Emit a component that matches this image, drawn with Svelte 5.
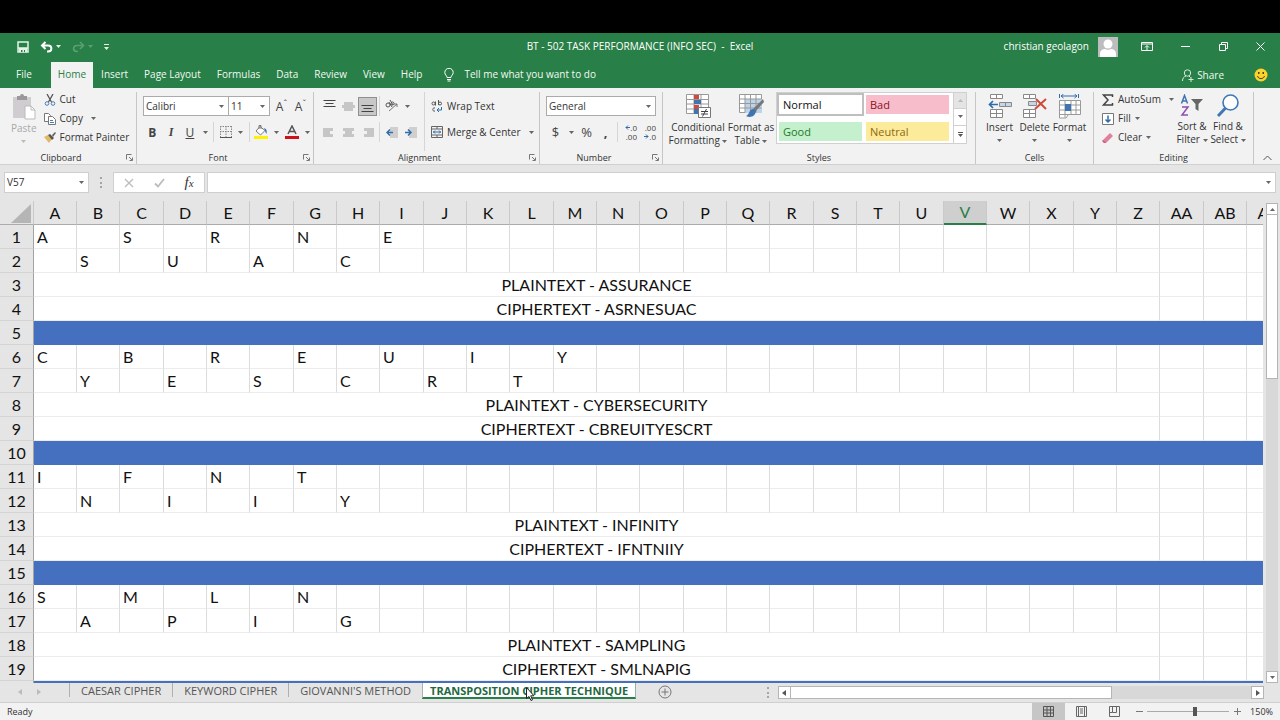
<script lang="ts">
interface Block {
	readonly plain: string;
	readonly cipher: string;
}

type RowKind = 'letters' | 'merged' | 'divider';

interface Row {
	readonly kind: RowKind;
	readonly text: string;
	readonly offset: number;
}

const blocks: readonly Block[] = [
	{ plain: 'ASSURANCE', cipher: 'ASRNESUAC' },
	{ plain: 'CYBERSECURITY', cipher: 'CBREUITYESCRT' },
	{ plain: 'INFINITY', cipher: 'IFNTNIIY' },
	{ plain: 'SAMPLING', cipher: 'SMLNAPIG' },
];

const letters = 'ABCDEFGHIJKLMNOPQRSTUVWXYZ'.split('');
const columns = [...letters, 'AA', 'AB', 'AC'];
const mergedSpan = 26;
const extraColumns = columns.slice(mergedSpan);

// each word fills two rail rows, two merged rows and a divider
const rows: Row[] = blocks.flatMap((b) => [
	{ kind: 'letters', text: b.plain, offset: 0 },
	{ kind: 'letters', text: b.plain, offset: 1 },
	{ kind: 'merged', text: `PLAINTEXT - ${b.plain}`, offset: 0 },
	{ kind: 'merged', text: `CIPHERTEXT - ${b.cipher}`, offset: 0 },
	{ kind: 'divider', text: '', offset: 0 },
]);

function letterAt(row: Row, col: number) {
	return col % 2 === row.offset ? (row.text[col] ?? '') : '';
}

const menu = ['File', 'Home', 'Insert', 'Page Layout', 'Formulas', 'Data', 'Review', 'View', 'Help'];
const sheets = ['CAESAR CIPHER', 'KEYWORD CIPHER', "GIOVANNI'S METHOD", 'TRANSPOSITION CIPHER TECHNIQUE'];

let activeMenu = $state('Home');
let activeSheet = $state(sheets[3]);
let selectedColumn = $state('V');
let formula = $state('');
let zoom = $state(59);
</script>

{#snippet caret()}
	<svg class="caret" viewBox="0 0 5 3" aria-hidden="true"><path d="M0 0h5L2.5 3z" /></svg>
{/snippet}

{#snippet launcher(name: string)}
	<button class="launcher" aria-label="{name} settings">
		<svg width="7" height="7" viewBox="0 0 7 7" aria-hidden="true">
			<path d="M.5 5.500V.5h5M3 3l3 3M6.500 3.500v3h-3" fill="none" stroke="#777" />
		</svg>
	</button>
{/snippet}

{#snippet lines(widths: number[], align: string)}
	<svg width="13" height="9" viewBox="0 0 13 9" aria-hidden="true">
		{#each widths as w, i}
			<path
				d="M{align === 'left' ? 0 : align === 'right' ? 13 - w : (13 - w) / 2} {i * 3 + 1.5}h{w}"
				stroke="currentColor"
			/>
		{/each}
	</svg>
{/snippet}

<div class="app">
	<div class="letterbox"></div>

	<header class="titlebar">
		<div class="quick">
			<button aria-label="Save">
				<svg width="12" height="12" viewBox="0 0 12 12">
					<path d="M1 1h10v10H1zM1 7h10" fill="none" stroke="#e4f3e8" stroke-width="1.500" />
					<path d="M2 7h8v4H2z" fill="#e4f3e8" />
					<path d="M4 9h1.500v2H4zM7 9h1v2H7z" fill="#287e47" />
				</svg>
			</button>
			<button class="undo" aria-label="Undo">
				<svg width="13" height="12" viewBox="0 0 13 12" fill="none" stroke="#fff" stroke-width="2">
					<path d="M5.500 1 2 4.500 5.500 8M2 4.500h6c4.500 0 4.500 6 0 6H7" />
				</svg>
				{@render caret()}
			</button>
			<button class="redo" aria-label="Redo">
				<svg width="13" height="12" viewBox="0 0 13 12" fill="none" stroke="#5a9f70" stroke-width="1.700">
					<path d="m8 1 3.500 3.500L8 8M11 4.500H5c-4.500 0-4.500 6 0 6h1" />
				</svg>
				{@render caret()}
			</button>
			<button aria-label="Customize Quick Access Toolbar">
				<svg width="5" height="6" viewBox="0 0 5 6"><path d="M0 0h5v1H0zM0 3h5L2.500 6z" fill="#e4f3e8" /></svg>
			</button>
		</div>
		<h1>BT - 502 TASK PERFORMANCE (INFO SEC) &nbsp;- &nbsp;Excel</h1>
		<div class="window">
			<span class="user">christian geolagon</span>
			<svg class="avatar" width="20" height="20" viewBox="0 0 20 20" aria-hidden="true">
				<path d="M0 0h20v20H0z" fill="#bdbcbe" />
				<circle cx="10" cy="7" r="4.500" fill="#fff" />
				<path d="M2 20v-3c0-4 3-5 5-5l3 1 3-1c2 0 5 1 5 5v3z" fill="#fff" />
			</svg>
			<button aria-label="Ribbon Display Options">
				<svg width="12" height="10" viewBox="0 0 12 10" fill="none" stroke="#fff">
					<path d="M.5.5h11v8H.5zM.5 2h11M6 8V4M4 5.500l2-2 2 2" />
				</svg>
			</button>
			<button aria-label="Minimize">
				<svg width="9" height="9" viewBox="0 0 9 9"><path d="M0 4.500h9" stroke="#fff" /></svg>
			</button>
			<button aria-label="Restore">
				<svg width="9" height="9" viewBox="0 0 9 9" fill="none" stroke="#fff">
					<path d="M.5 2.500h6v6h-6zM2.500 2.500v-2h6v6h-2" />
				</svg>
			</button>
			<button aria-label="Close">
				<svg width="9" height="9" viewBox="0 0 9 9"><path d="m.5.5 8 8m0-8-8 8" stroke="#fff" /></svg>
			</button>
		</div>
	</header>

	<nav class="menu">
		{#each menu as item (item)}
			<button class:active={item === activeMenu} class:file={item === 'File'} onclick={() => (activeMenu = item)}>
				{item}
			</button>
		{/each}
		<button class="tell">
			<svg width="10" height="14" viewBox="0 0 10 14" fill="none" stroke="#fff">
				<path d="M3 9.500C3 7.500.8 7 .8 4.500a4.200 4.200 0 0 1 8.400 0C9.200 7 7 7.500 7 9.500zM3 11.500h4M3.500 13h3" />
			</svg>
			Tell me what you want to do
		</button>
		<button class="share">
			<svg width="12" height="13" viewBox="0 0 12 13" fill="none" stroke="#d5ebdb">
				<circle cx="5.500" cy="4" r="3.200" />
				<path d="M.5 12c0-3 1.500-4.500 3.500-5M7 7l1.500 1.500M9 8v5M6.500 10.500h5" />
			</svg>
			Share
		</button>
		<button class="smile" aria-label="Feedback">
			<svg width="14" height="14" viewBox="0 0 14 14">
				<circle cx="7" cy="7" r="6.500" fill="#fbd32c" />
				<path d="M4 4h1.500v2H4zM8.500 4H10v2H8.500z" fill="#4d4310" />
				<path d="M3.500 8c1 3.500 6 3.500 7 0" fill="none" stroke="#4d4310" />
			</svg>
		</button>
	</nav>

	<section class="ribbon" aria-label="Ribbon">
		<div class="group">
			<div class="body clipboard">
				<button class="big off">
					<svg width="24" height="26" viewBox="0 0 24 26">
						<path d="M1 3h18v21H1z" fill="#cfcdd0" />
						<path d="M5 2h3a2 2 0 0 1 4 0h3v4H5z" fill="#9a989b" />
						<path d="M13 12h6l4 4v9H13z" fill="#fff" stroke="#bbb" />
						<path d="M19 12v4h4" fill="none" stroke="#bbb" />
					</svg>
					<span>Paste</span>
					{@render caret()}
				</button>
				<div class="stack">
					<button class="item">
						<svg width="12" height="12" viewBox="0 0 12 12" fill="none">
							<path d="m3 0 4.500 8M9 0 4.500 8" stroke="#555" stroke-width="1.300" />
							<circle cx="3" cy="9.500" r="1.800" stroke="#4b7db5" /><circle cx="9" cy="9.500" r="1.800" stroke="#4b7db5" />
						</svg>
						Cut
					</button>
					<button class="item">
						<svg width="12" height="12" viewBox="0 0 12 12" fill="#fff" stroke="#777">
							<path d="M.5.5h4l2 2v6h-6z" /><path d="M4.500 3.500h4l3 3v5h-7z" />
							<path d="M6 7.500h3M6 9.500h4" stroke="#4b7db5" />
						</svg>
						Copy {@render caret()}
					</button>
					<button class="item">
						<svg width="12" height="12" viewBox="0 0 12 12">
							<path d="m0 5 4-2 4 4-3 4z" fill="#e3b763" /><path d="m4 3 2-1 4 4-2 2z" fill="#555" />
							<path d="m8 3 3-3 1 1-3 4z" fill="#666" />
						</svg>
						Format Painter
					</button>
				</div>
			</div>
			<div class="caption"><span>Clipboard</span>{@render launcher('Clipboard')}</div>
		</div>

		<div class="group">
			<div class="body tools">
				<div class="line">
					<label class="pick family">
						<select aria-label="Font"><option>Calibri</option><option>Arial</option></select>
						{@render caret()}
					</label>
					<label class="pick size">
						<select aria-label="Font Size"><option>11</option><option>12</option></select>
						{@render caret()}
					</label>
					<button class="tool grow" aria-label="Increase Font Size">A<sup>ˆ</sup></button>
					<button class="tool grow" aria-label="Decrease Font Size">A<sup>ˇ</sup></button>
				</div>
				<div class="line">
					<button class="tool"><b>B</b></button>
					<button class="tool serif"><b><i>I</i></b></button>
					<button class="tool"><u>U</u></button>
					<button class="drop" aria-label="Underline options">{@render caret()}</button>
					<span class="rule"></span>
					<button class="tool" aria-label="Borders">
						<svg width="12" height="12" viewBox="0 0 12 12" fill="none" stroke="#888">
							<path d="M.5 0v11M6 0v11M11.500 0v11M0 .5h12M0 5.500h12" stroke-dasharray="1.500 1" /><path d="M0 11.500h12" stroke="#555" />
						</svg>
					</button>
					<button class="drop" aria-label="Border options">{@render caret()}</button>
					<span class="rule"></span>
					<button class="tool" aria-label="Fill Color">
						<svg width="14" height="14" viewBox="0 0 14 14">
							<path d="m6 1.500 5 4-4.500 4.500-4.500-4z" fill="#fff" stroke="#777" /><path d="M5 4V.5h2V4" fill="none" stroke="#777" />
							<path d="M10 3c3 1 3 3 2.500 6C11 7 11 5 10 3z" fill="#3f74b3" /><path d="M0 11h14v3H0z" fill="#fff200" />
						</svg>
					</button>
					<button class="drop" aria-label="Fill colors">{@render caret()}</button>
					<button class="tool" aria-label="Font Color">
						<svg width="14" height="14" viewBox="0 0 14 14">
							<path d="m3 9 4-8 4 8M4.500 6.500h5" fill="none" stroke="#555" stroke-width="1.500" /><path d="M0 11h14v3H0z" fill="#d0111b" />
						</svg>
					</button>
					<button class="drop" aria-label="Font colors">{@render caret()}</button>
				</div>
			</div>
			<div class="caption"><span>Font</span>{@render launcher('Font')}</div>
		</div>

		<div class="group">
			<div class="body align">
				<div class="tools">
					<div class="line">
						<button class="tool top" aria-label="Top Align">{@render lines([12, 8, 12], 'center')}</button>
						<button class="tool pale" aria-label="Middle Align">{@render lines([9, 13, 9], 'center')}</button>
						<button class="tool on" aria-label="Bottom Align">{@render lines([12, 8, 12], 'center')}</button>
						<span class="rule"></span>
						<button class="tool" aria-label="Orientation">
							<svg width="13" height="12" viewBox="0 0 13 12" fill="none" stroke="#555">
								<circle cx="3" cy="5" r="2" /><path d="m4 2 3 5" /><path d="m5 0 3 5" /><circle cx="7.500" cy="3.500" r="1.500" />
								<path d="m4 11 8-7M9 4h3v3" stroke="#777" />
							</svg>
						</button>
						<button class="drop" aria-label="Orientation options">{@render caret()}</button>
					</div>
					<div class="line">
						<button class="tool pale" aria-label="Align Left">{@render lines([10, 7, 10], 'left')}</button>
						<button class="tool pale" aria-label="Center">{@render lines([11, 7, 11], 'center')}</button>
						<button class="tool pale" aria-label="Align Right">{@render lines([10, 7, 10], 'right')}</button>
						<span class="rule"></span>
						<button class="tool" aria-label="Decrease Indent">
							<svg width="12" height="11" viewBox="0 0 12 11">
								<path d="M4 0h8v11H4z" fill="#cfcfcf" /><path d="M7 5.500H1M4 2.500l-3 3 3 3" fill="none" stroke="#2f6cab" stroke-width="1.500" />
							</svg>
						</button>
						<button class="tool" aria-label="Increase Indent">
							<svg width="12" height="11" viewBox="0 0 12 11">
								<path d="M4 0h8v11H4z" fill="#cfcfcf" /><path d="M0 5.500h6M3 2.500l3 3-3 3" fill="none" stroke="#2f6cab" stroke-width="1.500" />
							</svg>
						</button>
					</div>
				</div>
				<div class="tools wide">
					<button class="item">
						<svg width="12" height="12" viewBox="0 0 12 12" fill="none" stroke="#555">
							<circle cx="2.500" cy="3.500" r="1.500" /><path d="M4.500 1.500V5.500M7.500 0v5" /><circle cx="9" cy="3.500" r="1.500" />
							<path d="M4 8C1 7 1 12 4 11" /><path d="M10.500 7v3H6m2-2L6 10l2 2" stroke="#2f6cab" />
						</svg>
						Wrap Text
					</button>
					<button class="item merge">
						<svg width="12" height="12" viewBox="0 0 12 12" fill="none" stroke="#666">
							<path d="M.5.5h11v11H.5zM.5 3h11M.5 9h11M6 .5V3M6 9v2.500" />
							<path d="M2 6h8M4 4.500 2.500 6 4 7.500M8 4.500 9.500 6 8 7.500" stroke="#2f6cab" />
						</svg>
						Merge &amp; Center {@render caret()}
					</button>
				</div>
			</div>
			<div class="caption"><span>Alignment</span>{@render launcher('Alignment')}</div>
		</div>

		<div class="group">
			<div class="body tools">
				<div class="line">
					<label class="pick format">
						<select aria-label="Number Format"><option>General</option><option>Number</option></select>
						{@render caret()}
					</label>
				</div>
				<div class="line number">
					<button class="tool sign">$</button>
					<button class="drop" aria-label="Accounting formats">{@render caret()}</button>
					<button class="tool sign">%</button>
					<button class="tool sign"><b>,</b></button>
					<span class="rule"></span>
					<button class="tool digits" aria-label="Increase Decimal">
						<span>
							<svg width="5" height="5" viewBox="0 0 5 5" fill="none" stroke="#2f6cab"><path d="M5 2.500H1M3 .5l-2 2 2 2" /></svg>.0
						</span>
						<span>.00</span>
					</button>
					<button class="tool digits" aria-label="Decrease Decimal">
						<span>.00</span>
						<span>
							<svg width="5" height="5" viewBox="0 0 5 5" fill="none" stroke="#2f6cab"><path d="M0 2.500h4M2 .5l2 2-2 2" /></svg>.0
						</span>
					</button>
				</div>
			</div>
			<div class="caption"><span>Number</span>{@render launcher('Number')}</div>
		</div>

		<div class="group">
			<div class="body styles">
				<button class="big conditional">
					<svg width="25" height="25" viewBox="0 0 25 25">
						<path d="M.5.5h22v19H.5zM.5 5.500h22M.5 10h22M.5 15h22M8 .5v19M15 .5v19" fill="#fff" stroke="#999" />
						<path d="M8 1h5v4H8zM8 11h5v4H8z" fill="#d0493a" /><path d="M8 6h7v4H8zM8 15h4v5H8z" fill="#3f74b3" />
						<path d="M12.500 13.500h12v10h-12z" fill="#fff" stroke="#777" />
						<path d="M15 17.500h7M15 20h7M20.500 15l-4 7.500" stroke="#444" />
					</svg>
					<span>Conditional<br />Formatting {@render caret()}</span>
				</button>
				<button class="big table">
					<svg width="25" height="25" viewBox="0 0 25 25">
						<path d="M.5.5h22v18H.5z" fill="#fff" stroke="#999" /><path d="M6 5h17v14H6z" fill="#bdd3ea" />
						<path d="M.5 5h22M.5 9.500h22M.5 14h22M6 .5v18M11.500.5v18M17 .5v18" fill="none" stroke="#999" />
						<path d="m24 5 1 3-9 10-3-2z" fill="#777" /><path d="M14 15c-4 0-3 5-7 7 4 2 9 1 10-5z" fill="#3f74b3" />
					</svg>
					<span>Format as<br />Table {@render caret()}</span>
				</button>
				<div class="gallery">
					<button class="normal">Normal</button>
					<button class="bad">Bad</button>
					<button class="good">Good</button>
					<button class="neutral">Neutral</button>
					<div class="arrows">
						<button class="flip" aria-label="Previous styles">{@render caret()}</button>
						<button aria-label="Next styles">{@render caret()}</button>
						<button aria-label="More styles">
							<svg width="5" height="5" viewBox="0 0 5 5"><path d="M0 0h5v1H0zM0 2h5L2.500 5z" fill="#555" /></svg>
						</button>
					</div>
				</div>
			</div>
			<div class="caption"><span>Styles</span></div>
		</div>

		<div class="group">
			<div class="body cells">
				<button class="big">
					<svg width="24" height="25" viewBox="0 0 24 25" fill="#fff" stroke="#888">
						<path d="M2.500.5h12v4h-12zM8.500.5v4M2.500 15.500h12v8h-12zM8.500 15.500v8M2.500 19.500h12" />
						<path d="M11.500 8.500h12v4h-12zM17.500 8.500v4" fill="#c7d6e6" />
						<path d="M10 10.500H2M5 7l-3.500 3.500L5 14" fill="none" stroke="#2f6cab" stroke-width="1.700" />
					</svg>
					<span>Insert</span>{@render caret()}
				</button>
				<button class="big">
					<svg width="24" height="25" viewBox="0 0 24 25" fill="#fff" stroke="#888">
						<path d="M.5.5h12v4H.5zM6.500.5v4M.5 15.500h12v8H.5zM6.500 15.500v8M.5 19.500h12" />
						<path d="M5.500 7.500h8v4h-8z" fill="#c7d6e6" />
						<path d="m13 5 10 10M23 5 12 15" fill="none" stroke="#d0493a" stroke-width="2" />
					</svg>
					<span>Delete</span>{@render caret()}
				</button>
				<button class="big">
					<svg width="24" height="25" viewBox="0 0 24 25" fill="none">
						<path d="M3 2h16M5.500 0 3 2l2.500 2M16.500 0 19 2l-2.500 2M1.500 0v4M20.500 0v4" stroke="#2f6cab" />
						<path d="M1.500 6.500h21v14h-21zM1.500 11h21M1.500 16h21M7 6.500v17M13 6.500v14M18 6.500v14M1.500 20v4H8l2-3" fill="#fff" stroke="#999" />
						<path d="M7 10h6v7H7z" fill="#3f74b3" />
					</svg>
					<span>Format</span>{@render caret()}
				</button>
			</div>
			<div class="caption"><span>Cells</span></div>
		</div>

		<div class="group">
			<div class="body editing">
				<div class="stack">
					<button class="item sum">
						<svg width="12" height="12" viewBox="0 0 12 12" fill="none" stroke="#444" stroke-width="1.500">
							<path d="M10.500 3V1h-9L6 6l-4.500 5h9V9" />
						</svg>
						AutoSum {@render caret()}
					</button>
					<button class="item">
						<svg width="12" height="12" viewBox="0 0 12 12" fill="none">
							<path d="M.5.5h11v11H.5z" fill="#fff" stroke="#777" /><path d="M6 2.500V9M3.500 6.500 6 9l2.500-2.500" stroke="#2f6cab" stroke-width="1.500" />
						</svg>
						Fill {@render caret()}
					</button>
					<button class="item">
						<svg width="12" height="12" viewBox="0 0 12 12"><path d="m1 8 7-7 3 3-7 7H2z" fill="#e0809c" /><path d="m1 8 3 3H2L0 9z" fill="#c9587b" /></svg>
						Clear {@render caret()}
					</button>
				</div>
				<button class="big sort">
					<svg width="24" height="24" viewBox="0 0 24 24" fill="none">
						<path d="m1.500 9.500 3-8 3 8M2.500 7h4" stroke="#3f74b3" stroke-width="1.500" />
						<path d="M2 13h6l-6 8h6" stroke="#8d4fb0" stroke-width="1.500" />
						<path d="M11 5h12l-4.500 5v7l-3-2v-5z" fill="#666" />
					</svg>
					<span>Sort &amp;<br />Filter {@render caret()}</span>
				</button>
				<button class="big find">
					<svg width="24" height="24" viewBox="0 0 24 24" fill="none" stroke="#3f78b5">
						<path d="m2 22 8-8.500" stroke-width="3" /><circle cx="14.500" cy="8.500" r="7.500" fill="#fff" stroke-width="1.600" />
					</svg>
					<span>Find &amp;<br />Select {@render caret()}</span>
				</button>
			</div>
			<div class="caption"><span>Editing</span></div>
		</div>

		<button class="collapse" aria-label="Collapse the Ribbon">
			<svg width="9" height="6" viewBox="0 0 9 6" fill="none" stroke="#555"><path d="m.5 5 4-4 4 4" /></svg>
		</button>
	</section>

	<div class="formula">
		<label class="pick name">
			<input aria-label="Name Box" value="V57" />
			{@render caret()}
		</label>
		<span class="grip"></span>
		<div class="entry">
			<button aria-label="Cancel">
				<svg width="10" height="10" viewBox="0 0 10 10"><path d="m1 1 8 8m0-8L1 9" stroke="#bbb" stroke-width="1.300" /></svg>
			</button>
			<button aria-label="Enter">
				<svg width="11" height="10" viewBox="0 0 11 10" fill="none"><path d="m1 5.500 3 3L10 1" stroke="#bbb" stroke-width="1.800" /></svg>
			</button>
			<button class="fx" aria-label="Insert Function"><i>f<small>x</small></i></button>
		</div>
		<label class="pick bar">
			<input aria-label="Formula Bar" bind:value={formula} />
			{@render caret()}
		</label>
	</div>

	<main class="sheet">
		<div class="viewport">
			<table>
				<colgroup>
					<col class="head" />
					{#each columns as c (c)}<col />{/each}
				</colgroup>
				<thead>
					<tr>
						<th class="corner" aria-label="Select All">
							<svg width="20" height="19" viewBox="0 0 20 19"><path d="M20 0v19H0z" fill="#b5b5b5" /></svg>
						</th>
						{#each columns as c (c)}
							<th scope="col" class:selected={c === selectedColumn} onclick={() => (selectedColumn = c)}>{c}</th>
						{/each}
					</tr>
				</thead>
				<tbody>
					{#each rows as row, i}
						<tr class={row.kind}>
							<th scope="row">{i + 1}</th>
							{#if row.kind === 'letters'}
								{#each columns as c, n (c)}<td>{letterAt(row, n)}</td>{/each}
							{:else if row.kind === 'merged'}
								<td colspan={mergedSpan}>{row.text}</td>
								{#each extraColumns as c (c)}<td></td>{/each}
							{:else}
								<td colspan={columns.length}></td>
							{/if}
						</tr>
					{/each}
				</tbody>
			</table>
		</div>
		<div class="vscroll">
			<button class="flip" aria-label="Scroll up">{@render caret()}</button>
			<div class="thumb"></div>
			<div class="track"></div>
			<button aria-label="Scroll down">{@render caret()}</button>
		</div>
	</main>

	<div class="tabs">
		<div class="steps">
			<button aria-label="Previous sheet"><svg width="4" height="6" viewBox="0 0 4 6"><path d="M4 0v6L0 3z" fill="#bbb" /></svg></button>
			<button aria-label="Next sheet"><svg width="4" height="6" viewBox="0 0 4 6"><path d="M0 0v6l4-3z" fill="#bbb" /></svg></button>
		</div>
		{#each sheets as s (s)}
			<button class="tab" class:active={s === activeSheet} onclick={() => (activeSheet = s)}>
				{s}
				{#if s === activeSheet}
					<svg class="pointer" width="9" height="14" viewBox="0 0 9 14" aria-hidden="true">
						<path d="M.5.5v11l2.500-2 2 4 1.500-.7-1.800-4h3.300z" fill="#fff" stroke="#222" />
					</svg>
				{/if}
			</button>
		{/each}
		<button class="add" aria-label="New sheet">
			<svg width="14" height="14" viewBox="0 0 14 14" fill="none" stroke="#777"><circle cx="7" cy="7" r="6" /><path d="M7 3.500v7M3.500 7h7" /></svg>
		</button>
		<span class="grip"></span>
		<div class="hscroll">
			<button aria-label="Scroll left"><svg width="4" height="6" viewBox="0 0 4 6"><path d="M4 0v6L0 3z" fill="#555" /></svg></button>
			<div class="thumb"></div>
			<div class="track"></div>
			<button aria-label="Scroll right"><svg width="4" height="6" viewBox="0 0 4 6"><path d="M0 0v6l4-3z" fill="#555" /></svg></button>
		</div>
	</div>

	<footer class="status">
		<span class="ready">Ready</span>
		<button class="view on" aria-label="Normal">
			<svg width="11" height="11" viewBox="0 0 11 11" fill="none" stroke="#555"><path d="M.5.5h10v10H.5zM.5 4h10M.5 7h10M4 .5v10M7.500.5v10" /></svg>
		</button>
		<button class="view" aria-label="Page Layout">
			<svg width="11" height="11" viewBox="0 0 11 11" fill="none" stroke="#666"><path d="M.5.5h10v10H.5zM2.500.5v10M8.500.5v10M4 3h3M4 5h3M4 7h3" /></svg>
		</button>
		<button class="view" aria-label="Page Break Preview">
			<svg width="11" height="11" viewBox="0 0 11 11" fill="none" stroke="#666"><path d="M.5.5h10v10H.5zM3.500.5v6h4v-6M.5 6.500h3" /></svg>
		</button>
		<button class="step" aria-label="Zoom out"><svg width="7" height="7" viewBox="0 0 7 7"><path d="M0 3.500h7" stroke="#777" /></svg></button>
		<input class="zoom" type="range" aria-label="Zoom" min="0" max="100" bind:value={zoom} />
		<button class="step" aria-label="Zoom in"><svg width="7" height="7" viewBox="0 0 7 7"><path d="M0 3.500h7M3.500 0v7" stroke="#777" /></svg></button>
		<span class="percent">150%</span>
	</footer>
</div>

<style>
	:global(body) {
		margin: 0;
	}

	.app {
		--green: #287f47;
		--face: #f2f2f2;
		--chrome: #e5e5e5;
		--edge: #c6c6c6;
		display: flex;
		flex-direction: column;
		height: 100vh;
		overflow: hidden;
		font: 10px/13px 'Open Sans', 'Noto Sans', sans-serif;
		color: #333;
		background: var(--chrome);
	}

	.app * {
		box-sizing: border-box;
	}

	button,
	input,
	select {
		margin: 0;
		padding: 0;
		border: 0;
		background: none;
		color: inherit;
		font: inherit;
		white-space: nowrap;
	}

	button {
		display: flex;
		align-items: center;
		justify-content: center;
	}

	svg {
		flex: none;
	}

	.caret {
		display: inline-block;
		width: 5px;
		height: 3px;
		fill: #666;
		vertical-align: middle;
	}

	.flip .caret {
		transform: rotate(180deg);
	}

	.letterbox {
		flex: none;
		height: 33px;
		background: #000;
	}

	/* title bar */
	.titlebar {
		display: grid;
		grid-template-columns: 1fr auto 1fr;
		align-items: center;
		flex: none;
		height: 29px;
		padding-bottom: 2px;
		background: var(--green);
		color: #fff;
	}

	.titlebar h1 {
		margin: 0;
		font-size: 10px;
		font-weight: 400;
	}

	.quick {
		display: flex;
		align-items: center;
		gap: 11px;
		padding-left: 17px;
	}

	.quick button {
		gap: 3px;
	}

	.quick .caret {
		fill: #e4f3e8;
	}

	.quick .redo .caret {
		fill: #5a9f70;
	}

	.window {
		display: flex;
		align-items: center;
		justify-content: flex-end;
	}

	.window button {
		width: 38px;
		height: 27px;
	}

	.window button:last-child {
		padding-right: 1px;
	}

	.avatar {
		margin: 0 10px 0 9px;
	}

	/* ribbon tabs */
	.menu {
		display: flex;
		flex: none;
		height: 26px;
		padding-left: 8px;
		background: var(--green);
		color: #f1faf3;
	}

	.menu button {
		padding: 0 8px 1px;
	}

	.menu .file {
		margin-right: 11px;
	}

	.menu .active {
		padding: 0 7px 1px;
		background: var(--face);
		color: var(--green);
	}

	.menu .tell {
		gap: 10px;
		padding-left: 14px;
	}

	.menu .share {
		gap: 3px;
		margin-left: auto;
		padding: 0 30px 0 0;
	}

	.menu .smile {
		padding: 0 12px 0 0;
	}

	/* ribbon */
	.ribbon {
		display: grid;
		grid-template-columns: 137px 177px 226px 123px 313px 118px 160px 1fr;
		flex: none;
		height: 77px;
		border-bottom: 1px solid #d0d0d0;
		background: var(--face);
	}

	.group {
		display: flex;
		flex-direction: column;
		margin: 4px 0 0;
		border-right: 1px solid var(--edge);
	}

	.body {
		display: flex;
		flex: 1;
		min-height: 0;
	}

	.caption {
		display: flex;
		align-items: center;
		height: 13px;
		font-size: 9px;
	}

	.caption span {
		flex: 1;
		text-align: center;
	}

	.caption:has(.launcher) span {
		padding-right: 14px;
	}

	.launcher {
		width: 13px;
		margin-left: -13px;
	}

	.item {
		justify-content: flex-start;
		gap: 4px;
		height: 19px;
	}

	.item .caret {
		margin-left: 4px;
	}

	.stack {
		display: flex;
		flex-direction: column;
		margin-top: -2px;
	}

	.big {
		flex-direction: column;
		justify-content: flex-start;
		padding-top: 2px;
	}

	.big > span {
		margin-top: 2px;
		white-space: nowrap;
	}

	.big > .caret {
		margin-top: 5px;
	}

	.big.off {
		color: #a9a9a9;
	}

	.big.off .caret {
		fill: #bbb;
	}

	.clipboard {
		gap: 7px;
		padding-left: 11px;
	}

	.tools {
		display: flex;
		flex-direction: column;
		gap: 6px;
		padding: 4px 0 0 6px;
	}

	.line {
		display: flex;
		align-items: center;
		height: 20px;
	}

	.tool {
		width: 19px;
		height: 19px;
		font-size: 12px;
		color: #444;
	}

	.tool.serif {
		font-family: 'Liberation Serif', serif;
	}

	.tool.top {
		padding-bottom: 6px;
	}

	.tool.on {
		border: 1px solid #8f8f8f;
		padding-top: 4px;
		background: #c8c8c8;
	}

	.tool.pale {
		color: #c6c6c6;
	}

	.tool.pale path {
		stroke-width: 3px;
	}

	.tool.grow sup {
		margin-top: -6px;
		font-size: 9px;
	}

	.drop {
		width: 12px;
		height: 19px;
	}

	.rule {
		width: 1px;
		height: 20px;
		margin: 0 2px;
		background: #d5d5d5;
	}

	.pick {
		display: flex;
		align-items: center;
		height: 20px;
		padding: 0 4px 0 2px;
		border: 1px solid #ababab;
		background: #fff;
	}

	.pick select,
	.pick input {
		flex: 1;
		min-width: 0;
		appearance: none;
		outline: 0;
	}

	.pick.family {
		width: 86px;
	}

	.pick.size {
		width: 42px;
		margin: 0 2px 0 -1px;
	}

	.pick.format {
		width: 110px;
	}

	.align .wide {
		margin-left: 4px;
		border-left: 1px solid #d5d5d5;
	}

	.align .tools .item {
		height: 20px;
	}

	.number .sign {
		font-size: 13px;
	}

	.tool.digits {
		flex-direction: column;
		align-items: flex-end;
		padding-right: 2px;
		font-size: 8px;
		line-height: 9px;
	}

	.tool.digits span {
		display: flex;
		align-items: center;
	}

	.styles {
		padding-left: 7px;
	}

	.conditional {
		width: 56px;
	}

	.big.table {
		width: 50px;
	}

	.gallery {
		display: grid;
		grid-template: 1fr 1fr / 1fr 1fr 13px;
		gap: 4px;
		width: 191px;
		height: 52px;
		padding-left: 2px;
		border: 1px solid #d0d0d0;
		background: #fff;
		font-size: 11px;
	}

	.gallery > button {
		justify-content: flex-start;
		margin: 2px 0;
		padding-left: 4px;
	}

	.gallery .normal {
		outline: 2px solid #bfbfbf;
		color: #111;
	}

	.gallery .bad {
		background: #f8bdca;
		color: #8f1126;
	}

	.gallery .good {
		background: #c5f0cd;
		color: #1e7a26;
	}

	.gallery .neutral {
		background: #fdeb9c;
		color: #91680b;
	}

	.arrows {
		display: grid;
		grid-area: 1 / 3 / 3 / 4;
		border-left: 1px solid #d0d0d0;
	}

	.arrows button + button {
		border-top: 1px solid #d0d0d0;
	}

	.arrows .flip {
		background: #e4e4e4;
	}

	.arrows .flip .caret {
		fill: #bbb;
	}

	.cells {
		justify-content: center;
	}

	.cells .big {
		width: 35px;
	}

	.editing {
		padding-left: 8px;
	}

	.editing .stack {
		width: 72px;
	}

	.editing .caret {
		margin-left: 0;
	}

	.editing .sum .caret {
		margin-left: 4px;
	}

	.editing .big {
		width: 36px;
	}

	.collapse {
		align-items: flex-end;
		padding-bottom: 3px;
	}

	/* formula bar */
	.formula {
		display: flex;
		align-items: center;
		flex: none;
		height: 36px;
		padding: 0 4px 1px;
	}

	.formula .pick,
	.entry {
		height: 21px;
		border: 1px solid #cfcfcf;
		background: #fff;
	}

	.pick.name {
		width: 85px;
	}

	.pick.bar {
		flex: 1;
	}

	.grip {
		width: 1px;
		height: 11px;
		margin: 0 11px;
		border-left: 2px dotted #a5a5a5;
	}

	.entry {
		display: flex;
		width: 92px;
		margin-right: 2px;
	}

	.entry button {
		flex: 1;
	}

	.fx {
		font: 15px/15px 'Liberation Serif', serif;
	}

	.fx small {
		font-size: 11px;
	}

	/* sheet */
	.sheet {
		display: flex;
		flex: 1;
		min-height: 0;
	}

	.viewport {
		flex: 1;
		min-width: 0;
		overflow: hidden;
		background: #fff;
	}

	table {
		width: 0;
		table-layout: fixed;
		border-collapse: separate;
		border-spacing: 0;
		font: 16px/20px Lato, 'Open Sans', sans-serif;
		color: #111;
	}

	col {
		width: 43px;
	}

	col:nth-child(3n + 1) {
		width: 44px;
	}

	col.head {
		width: 34px;
	}

	th,
	td {
		height: 24px;
		padding: 0;
		border-right: 1px solid #dcdcdc;
		border-bottom: 1px solid #ececec;
		font-weight: 400;
		white-space: nowrap;
	}

	td {
		padding-left: 3px;
	}

	th {
		border-color: #c9c9c9;
		background: var(--chrome);
	}

	tbody th {
		border-right-color: #a3a3a3;
		border-bottom-color: #d4d4d4;
	}

	thead th {
		border-bottom-color: #ababab;
	}

	.corner {
		padding: 0 2px 0 0;
		text-align: right;
	}

	.corner svg {
		display: inline-block;
		vertical-align: middle;
	}

	th.selected {
		border-bottom: 2px solid var(--green);
		background: #cfcfcf;
		color: var(--green);
	}

	.merged td {
		padding: 0;
		text-align: center;
	}

	.divider td {
		border-color: #4570bf;
		background: #4570bf;
	}

	.vscroll {
		display: flex;
		flex-direction: column;
		width: 17px;
		padding: 2px 2px 0 3px;
	}

	.vscroll button,
	.vscroll .thumb,
	.hscroll button,
	.hscroll .thumb {
		border: 1px solid #b5b5b5;
		background: #fff;
	}

	.vscroll button {
		height: 12px;
	}

	.vscroll .thumb {
		flex: 164;
		border-top: 0;
	}

	.vscroll .track {
		flex: 294;
	}

	.track {
		background: #d8d8d8;
	}

	/* sheet tabs */
	.tabs {
		display: flex;
		align-items: flex-start;
		flex: none;
		height: 19px;
		font-size: 11px;
		color: #555;
	}

	.steps {
		display: flex;
		gap: 15px;
		width: 69px;
		height: 18px;
		padding-left: 18px;
	}

	.tab {
		position: relative;
		height: 14px;
		padding: 0 11px;
		border-left: 1px solid #b0b0b0;
	}

	.tab.active {
		height: 16px;
		padding: 0 7px;
		border-right: 1px solid #8fb79d;
		border-bottom: 2px solid var(--green);
		background: #fff;
		color: #23693f;
		font-weight: 700;
	}

	.pointer {
		position: absolute;
		top: 4px;
		left: 103px;
	}

	.add {
		height: 18px;
		margin-left: 22px;
	}

	.tabs .grip {
		margin: 4px 9px 0 auto;
	}

	.hscroll {
		display: flex;
		flex: 0 0 38%;
		height: 13px;
		margin: 3px 16px 0 0;
	}

	.hscroll button {
		width: 13px;
	}

	.hscroll .thumb {
		flex: 322;
		border-left: 0;
	}

	.hscroll .track {
		flex: 139;
	}

	/* status bar */
	.status {
		display: flex;
		align-items: center;
		flex: none;
		height: 18px;
		padding: 0 7px;
		border-top: 1px solid #cfcfcf;
		background: var(--face);
		font-size: 9px;
	}

	.ready {
		flex: 1;
	}

	.view {
		width: 33px;
		height: 17px;
	}

	.view.on {
		background: #c6c6c6;
	}

	.step {
		width: 16px;
	}

	.zoom {
		width: 82px;
		height: 13px;
		appearance: none;
	}

	.zoom::-webkit-slider-runnable-track {
		height: 1px;
		background: #aaa;
	}

	.zoom::-webkit-slider-thumb {
		width: 4px;
		height: 9px;
		margin-top: -4px;
		appearance: none;
		background: #555;
	}

	.percent {
		width: 28px;
		text-align: right;
	}
</style>
